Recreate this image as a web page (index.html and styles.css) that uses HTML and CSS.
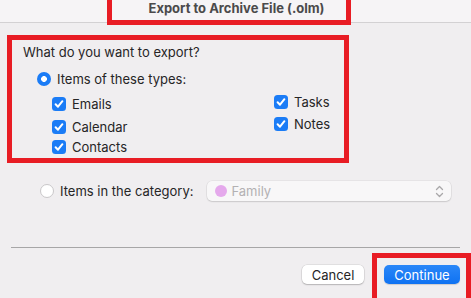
FILE: index.html
```html
<!DOCTYPE html>
<html>
<head>
<meta charset="utf-8">
<link rel="stylesheet" href="styles.css">
</head>
<body>
<div class="window">
  <div class="titlebar">Export to Archive File (.olm)</div>
  <div class="content">
    <div class="heading">What do you want to export?</div>
    <div class="radio-row first">
      <span class="radio on"></span>
      <span class="label">Items of these types:</span>
    </div>
    <div class="types">
      <div class="col left">
        <div class="cb-row r-emails"><span class="cb"><svg width="14" height="14" viewBox="0 0 14 14"><path d="M3.6 7.3 L6 9.7 L10.4 4.2" fill="none" stroke="#fff" stroke-width="2" stroke-linecap="round" stroke-linejoin="round"/></svg></span><span class="label">Emails</span></div>
        <div class="cb-row r-calendar"><span class="cb"><svg width="14" height="14" viewBox="0 0 14 14"><path d="M3.6 7.3 L6 9.7 L10.4 4.2" fill="none" stroke="#fff" stroke-width="2" stroke-linecap="round" stroke-linejoin="round"/></svg></span><span class="label">Calendar</span></div>
        <div class="cb-row r-contacts"><span class="cb"><svg width="14" height="14" viewBox="0 0 14 14"><path d="M3.6 7.3 L6 9.7 L10.4 4.2" fill="none" stroke="#fff" stroke-width="2" stroke-linecap="round" stroke-linejoin="round"/></svg></span><span class="label">Contacts</span></div>
      </div>
      <div class="col right">
        <div class="cb-row r-tasks"><span class="cb"><svg width="14" height="14" viewBox="0 0 14 14"><path d="M3.6 7.3 L6 9.7 L10.4 4.2" fill="none" stroke="#fff" stroke-width="2" stroke-linecap="round" stroke-linejoin="round"/></svg></span><span class="label">Tasks</span></div>
        <div class="cb-row r-notes"><span class="cb"><svg width="14" height="14" viewBox="0 0 14 14"><path d="M3.6 7.3 L6 9.7 L10.4 4.2" fill="none" stroke="#fff" stroke-width="2" stroke-linecap="round" stroke-linejoin="round"/></svg></span><span class="label">Notes</span></div>
      </div>
    </div>
    <div class="radio-row category">
      <span class="radio"></span>
      <span class="label">Items in the category:</span>
      <div class="popup">
        <span class="dot"></span>
        <span class="popup-text">Family</span>
        <svg class="chev" width="9" height="13" viewBox="0 0 9 13"><path d="M1.5 4.5 L4.5 1.5 L7.5 4.5 M1.5 8.5 L4.5 11.5 L7.5 8.5" fill="none" stroke="#a9a7a9" stroke-width="1.3" stroke-linecap="round" stroke-linejoin="round"/></svg>
      </div>
    </div>
    <div class="separator"></div>
    <div class="buttons">
      <button class="btn cancel">Cancel</button>
      <button class="btn primary">Continue</button>
    </div>
  </div>
  <div class="mark mark-title"></div>
  <div class="mark mark-types"></div>
  <div class="mark mark-continue"></div>
</div>
</body>
</html>
```

FILE: styles.css
```css
* { box-sizing: border-box; }
html, body { margin: 0; padding: 0; }
body {
  width: 471px;
  height: 298px;
  overflow: hidden;
  background: #f0eef0;
  font-family: Inter, "Liberation Sans", sans-serif;
  font-size: 13px;
  color: #262526;
}
.window { position: relative; width: 471px; height: 298px; overflow: hidden; }
.titlebar {
  height: 23px;
  line-height: 16px;
  text-align: center;
  font-weight: 700;
  color: #4b4a4b;
  background: #f6f4f6;
  border-bottom: 1px solid #d3d1d3;
  padding-left: 2px;
}
.content { display: flex; flex-direction: column; }
.heading { margin-top: 21px; margin-left: 23px; line-height: 16px; }
.radio-row { display: flex; align-items: center; line-height: 16px; }
.radio-row.first { margin-top: 11px; margin-left: 37px; height: 16px; }
.radio {
  width: 14px; height: 14px; border-radius: 50%;
  background: #fff; border: 1px solid #c9c7c9;
  flex: none; margin-right: 6px;
}
.radio.on {
  border: none;
  background: radial-gradient(circle, #fff 0 2.6px, #1b7cf6 3.2px);
}
.types { display: flex; margin-left: 52px; }
.col { display: flex; flex-direction: column; }
.col.left { width: 222px; }
.cb-row { display: flex; align-items: center; height: 16px; line-height: 16px; }
.cb {
  width: 14px; height: 14px; border-radius: 3.5px;
  background: #1b7cf6; flex: none; margin-right: 6px;
  display: flex;
}
.r-emails { margin-top: 9px; }
.r-calendar { margin-top: 7px; }
.r-contacts { margin-top: 4px; }
.r-tasks { margin-top: 7px; }
.r-notes { margin-top: 6px; }
.radio-row.category { margin-top: 26px; margin-left: 40px; height: 20px; }
.popup {
  margin-left: 14px;
  width: 244px; height: 20px;
  background: #f8f7f8;
  border-radius: 5px;
  box-shadow: 0 0 0 0.5px rgba(0,0,0,0.08), 0 1px 1.5px rgba(0,0,0,0.12);
  display: flex; align-items: center;
  padding-left: 8px; padding-right: 7px;
}
.dot { width: 12px; height: 12px; border-radius: 50%; background: #e5a9ec; margin-right: 4px; flex: none; }
.popup-text { color: #b3b1b3; flex: 1; }
.chev { flex: none; }
.separator { margin: 46px 11px 0 11px; height: 1px; background: #a7a6a7; }
.buttons { display: flex; justify-content: flex-end; margin-top: 17px; padding-right: 11px; gap: 20px; }
.btn {
  font-family: inherit; font-size: 13px; line-height: 16px;
  height: 19px; border: none; border-radius: 5px; padding: 0;
}
.cancel {
  width: 62px; background: #fff; color: #262526;
  box-shadow: 0 0 0 0.5px rgba(0,0,0,0.12), 0 1px 1.5px rgba(0,0,0,0.2);
}
.primary {
  width: 76px; color: #fff;
  background: linear-gradient(#2a87f8, #0f72f2);
  box-shadow: 0 1px 1px rgba(0,0,0,0.15);
}
.mark { position: absolute; border: 5px solid #e81c24; }
.mark-title { left: 107px; top: -10px; width: 244px; height: 35px; }
.mark-types { left: 7px; top: 35px; width: 342px; height: 128px; }
.mark-continue { left: 372px; top: 253px; width: 99px; height: 50px; }
```
